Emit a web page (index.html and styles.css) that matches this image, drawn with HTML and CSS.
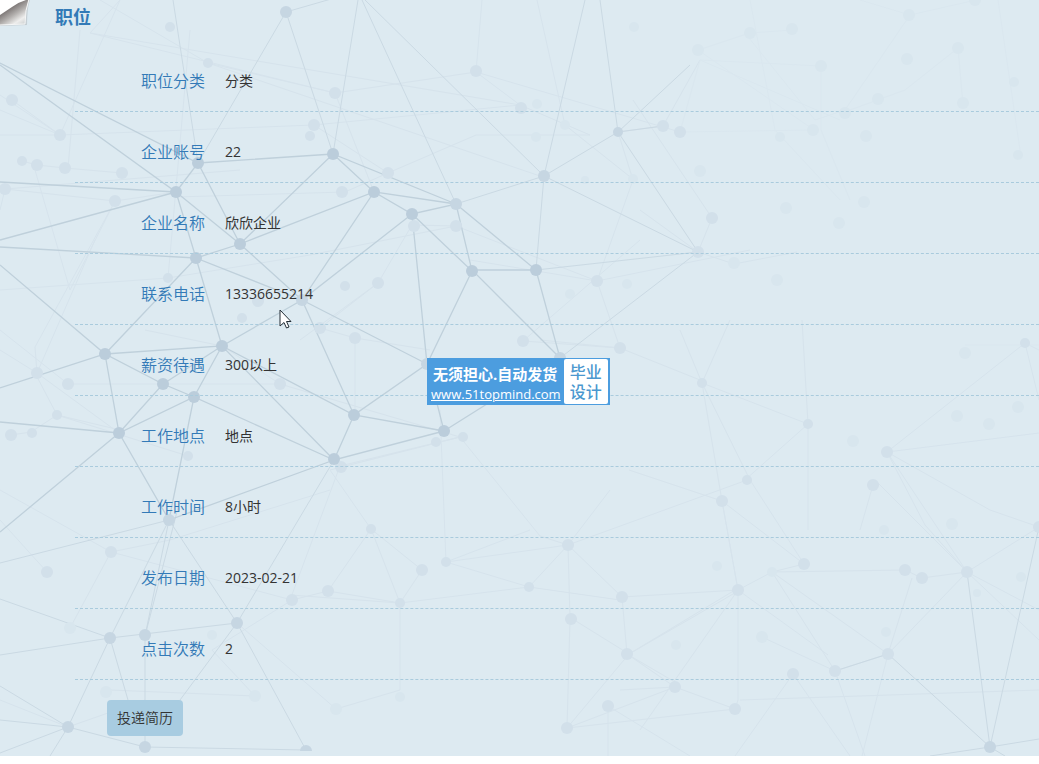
FILE: index.html
```html
<!DOCTYPE html>
<html lang="zh-CN">
<head>
<meta charset="utf-8">
<title>职位</title>
<link rel="stylesheet" href="styles.css">
</head>
<body>
<main class="page">
  <svg class="network" viewBox="0 0 1039 756" preserveAspectRatio="xMinYMin slice" aria-hidden="true">
    <g class="net-faint">
      <path d="M0 95L60 135L12 100M60 135L0 110M0 135H60L314 125L520 105L476 72L335 93L208 63L100 0M208 63L540 176M60 135L120 0M5 189L115 201L176 192M22 161L37 165L65 168L122 173M115 201L35 347L37 373L0 350M115 201L70 290L35 170M80 30L68 168M168 278L0 290M168 278L310 255L456 226L412 225L378 283L320 328L355 338L430 350M168 278L190 30M37 373L95 240M37 373L119 433M68 384H280L460 437L330 470M68 384L0 330M35 373L57 415L120 430M11 435L31 432L57 415L188 456M0 490L111 552L170 540L330 490M47 572L0 520M111 552L70 628M111 552L292 600L328 591L400 603L422 570M328 591L371 529L330 470M255 696L110 690M336 709L237 623M255 696L212 650L292 600M371 529L422 570M371 529L400 603L400 690L336 709M460 437L540 536L568 545M476 72L482 0M476 72L680 132M335 93L374 192M335 93L90 33M388 173L314 125M388 173L345 192L176 197M388 173L476 135H590L520 105M456 226L597 281L620 348L523 341L640 240M597 281L633 180L618 132M378 283L300 340M355 338L355 415M280 384L222 346L145 330M340 466L460 437M340 466L290 600M565 125L537 0M565 125L634 180M712 218L633 100M712 218L698 252L640 210M698 252L734 264L797 252M618 132L663 126L700 60M702 383L680 330M702 383L730 320M702 383L808 424L745 480M702 383L722 501L738 590L828 655M702 383L750 480L804 564M802 320L808 424V530M887 452L1039 433M887 452L1025 343L1039 350M887 452L990 510L1039 527L967 572L887 452M887 452L925 525L967 572L922 578L905 570L772 572L804 564M873 485L860 530M1025 343L1039 400M568 545L747 480M568 545L446 562L529 587L400 603L290 595M568 545L529 587M568 545L622 597L738 590L772 572M568 545L570 619L567 728L629 654L735 590M622 597L627 654L675 687L735 709L567 728L675 687M571 618L629 654L740 590M627 654L680 685M722 501L804 564M722 501L629 470M722 501L738 590V700L735 709M738 590L640 730M446 562L440 410M446 562L530 530M762 637L835 671L888 654L912 578M888 654L772 572L835 671L865 756M888 654L967 572L1039 640M888 654L862 756M793 674L735 756M793 674L850 756M675 687L620 690M608 706V756M608 706L690 756M529 587L620 600M967 572L1039 610M740 700L1039 690M610 490L568 545M875 480L967 572M470 260L597 281L750 250M540 340L620 348L700 380M120 0L90 33L520 105M0 210L5 189L240 170M0 700L68 727L145 700"/>
    </g>
    <g class="net-pale">
      <path d="M700 60L821 66M680 132L700 60M698 50L750 33L792 30M698 50L814 130L680 132M745 33L815 120L845 110L910 15L976 0M750 0L775 130L840 200M821 66V130L850 200M958 48L963 105M998 0L1020 150M910 15L860 0M958 48L905 90L850 110M700 60L840 120M965 345H1039"/>
    </g>
    <g class="net-soft">
      <path d="M544 176L585 0M618 132L600 0M544 176L618 132L698 252M544 176L698 252M618 132L663 126M618 132L690 65M536 270L698 252L560 358M544 176L536 270M110 638L128 700M145 636V747M237 623L180 700M68 727L0 686M68 727L0 720M68 727L0 753M68 727L145 747L306 750M68 727L50 756M145 636L180 500M888 654L990 747L967 572M990 747L1039 527M990 747L1039 739M990 747L930 756M990 747L1005 756M888 654L835 671M334 460L237 623M286 12L345 -5M173 0L198 163L286 12L333 154L358 0M362 0L456 204M365 0L544 176L456 204M0 563L169 520M169 520L110 638L0 599M169 520L237 623L110 638L0 655M169 520L145 636M110 638L68 727M237 623L306 750"/>
    </g>
    <g class="net-strong">
      <path d="M0 63L198 163L333 154L374 192L456 204L333 154L240 244L198 163L176 192L0 65M0 182L176 192L0 240M176 192L240 244L302 300L196 258L176 192M0 247L196 258L240 244L374 192L412 214L456 204L472 271L412 214L427 364L302 300L412 214M196 258L105 354L0 265M196 258L222 346L105 354L0 388M302 300L222 346M374 192L302 300M222 346L163 384L105 354L119 433L163 384L194 397L222 346L334 460L194 397L119 433L0 422M302 300L354 415L222 346M456 204L536 270H472L560 358L536 270M472 271L427 364L354 415L444 431L334 460L354 415M444 431L560 358M427 364L444 431M0 532L119 433L169 520L334 460M194 397L169 520"/>
    </g>
    <g class="dot-faint">
      <circle cx="12" cy="100" r="6"/><circle cx="60" cy="135" r="6"/><circle cx="22" cy="161" r="5"/><circle cx="37" cy="165" r="6"/><circle cx="65" cy="168" r="6"/><circle cx="122" cy="173" r="6"/><circle cx="5" cy="189" r="6"/><circle cx="115" cy="201" r="6"/><circle cx="208" cy="63" r="5"/><circle cx="170" cy="27" r="5"/><circle cx="335" cy="93" r="6"/><circle cx="314" cy="125" r="6"/><circle cx="310" cy="136" r="5"/><circle cx="342" cy="192" r="6"/><circle cx="168" cy="278" r="5"/><circle cx="37" cy="373" r="6"/><circle cx="68" cy="384" r="6"/><circle cx="57" cy="415" r="5"/><circle cx="11" cy="435" r="6"/><circle cx="32" cy="433" r="5"/><circle cx="188" cy="456" r="5"/><circle cx="280" cy="384" r="6"/><circle cx="320" cy="328" r="6"/><circle cx="258" cy="301" r="6"/><circle cx="242" cy="318" r="5"/><circle cx="355" cy="338" r="6"/><circle cx="378" cy="283" r="6"/><circle cx="345" cy="286" r="5"/><circle cx="388" cy="173" r="6"/><circle cx="414" cy="226" r="6"/><circle cx="456" cy="226" r="6"/><circle cx="476" cy="71" r="6"/><circle cx="521" cy="108" r="6"/><circle cx="663" cy="126" r="6"/><circle cx="680" cy="132" r="6"/><circle cx="597" cy="281" r="6"/><circle cx="523" cy="341" r="6"/><circle cx="620" cy="348" r="6"/><circle cx="463" cy="437" r="5"/><circle cx="436" cy="442" r="5"/><circle cx="341" cy="467" r="6"/><circle cx="111" cy="552" r="6"/><circle cx="47" cy="572" r="6"/><circle cx="292" cy="600" r="6"/><circle cx="328" cy="591" r="6"/><circle cx="371" cy="529" r="5"/><circle cx="422" cy="570" r="6"/><circle cx="446" cy="562" r="5"/><circle cx="400" cy="603" r="5"/><circle cx="529" cy="587" r="5"/><circle cx="568" cy="545" r="6"/><circle cx="622" cy="597" r="6"/><circle cx="571" cy="619" r="6"/><circle cx="627" cy="654" r="6"/><circle cx="675" cy="687" r="6"/><circle cx="608" cy="706" r="6"/><circle cx="567" cy="728" r="6"/><circle cx="735" cy="709" r="6"/><circle cx="738" cy="590" r="6"/><circle cx="804" cy="564" r="6"/><circle cx="722" cy="501" r="6"/><circle cx="747" cy="480" r="5"/><circle cx="702" cy="383" r="5"/><circle cx="808" cy="424" r="5"/><circle cx="887" cy="452" r="6"/><circle cx="873" cy="485" r="6"/><circle cx="905" cy="570" r="6"/><circle cx="922" cy="578" r="6"/><circle cx="967" cy="572" r="6"/><circle cx="888" cy="654" r="6"/><circle cx="835" cy="671" r="6"/><circle cx="793" cy="674" r="6"/><circle cx="1025" cy="343" r="5"/><circle cx="1039" cy="527" r="6"/><circle cx="712" cy="218" r="6"/><circle cx="698" cy="252" r="6"/>
    </g>
    <g class="dot-pale">
      <circle cx="537" cy="104" r="5"/><circle cx="565" cy="125" r="5"/><circle cx="536" cy="137" r="5"/><circle cx="585" cy="180" r="4"/><circle cx="633" cy="179" r="5"/><circle cx="570" cy="294" r="5"/><circle cx="627" cy="284" r="5"/><circle cx="70" cy="628" r="6"/><circle cx="212" cy="635" r="5"/><circle cx="255" cy="696" r="6"/><circle cx="106" cy="692" r="6"/><circle cx="336" cy="709" r="6"/><circle cx="400" cy="697" r="5"/><circle cx="772" cy="572" r="5"/><circle cx="977" cy="593" r="4"/><circle cx="762" cy="637" r="6"/>
      <circle cx="698" cy="50" r="6"/><circle cx="750" cy="33" r="6"/><circle cx="792" cy="29" r="6"/><circle cx="821" cy="66" r="6"/><circle cx="909" cy="15" r="6"/><circle cx="975" cy="0" r="6"/><circle cx="907" cy="59" r="6"/><circle cx="958" cy="48" r="6"/><circle cx="878" cy="99" r="6"/><circle cx="845" cy="113" r="6"/><circle cx="963" cy="103" r="6"/><circle cx="1014" cy="82" r="5"/><circle cx="813" cy="130" r="6"/><circle cx="780" cy="137" r="5"/><circle cx="866" cy="136" r="6"/><circle cx="700" cy="171" r="6"/><circle cx="1018" cy="155" r="5"/><circle cx="786" cy="208" r="6"/><circle cx="864" cy="202" r="6"/><circle cx="839" cy="223" r="6"/><circle cx="634" cy="27" r="5"/><circle cx="734" cy="263" r="6"/><circle cx="777" cy="280" r="6"/><circle cx="965" cy="353" r="6"/><circle cx="957" cy="416" r="6"/><circle cx="989" cy="424" r="6"/><circle cx="1018" cy="407" r="6"/><circle cx="853" cy="441" r="6"/><circle cx="952" cy="524" r="6"/><circle cx="884" cy="530" r="5"/><circle cx="1021" cy="577" r="5"/><circle cx="886" cy="632" r="5"/><circle cx="717" cy="566" r="5"/><circle cx="676" cy="645" r="5"/>
    </g>
    <g class="dot-soft">
      <circle cx="286" cy="12" r="6"/><circle cx="544" cy="176" r="6"/><circle cx="618" cy="132" r="5"/><circle cx="560" cy="358" r="6"/><circle cx="427" cy="364" r="6"/><circle cx="456" cy="204" r="6"/><circle cx="302" cy="300" r="6"/><circle cx="169" cy="520" r="6"/><circle cx="237" cy="623" r="6"/><circle cx="110" cy="638" r="6"/><circle cx="145" cy="635" r="6"/><circle cx="68" cy="727" r="6"/><circle cx="145" cy="747" r="6"/><path d="M300 751a6 6 0 0 1 12 0z"/><circle cx="990" cy="747" r="6"/>
    </g>
    <g class="dot-strong">
      <circle cx="198" cy="163" r="6"/><circle cx="333" cy="154" r="6"/><circle cx="176" cy="192" r="6"/><circle cx="240" cy="244" r="6"/><circle cx="196" cy="258" r="6"/><circle cx="374" cy="192" r="6"/><circle cx="412" cy="214" r="6"/><circle cx="472" cy="271" r="6"/><circle cx="536" cy="270" r="6"/><circle cx="222" cy="346" r="6"/><circle cx="105" cy="354" r="6"/><circle cx="163" cy="384" r="6"/><circle cx="194" cy="397" r="6"/><circle cx="119" cy="433" r="6"/><circle cx="334" cy="459" r="6"/><circle cx="354" cy="415" r="6"/><circle cx="444" cy="431" r="6"/>
    </g>
  </svg>

  <svg class="curl" viewBox="0 0 32 28" aria-hidden="true">
    <defs>
      <linearGradient id="fold" x1="10" y1="7" x2="22" y2="25" gradientUnits="userSpaceOnUse">
        <stop offset="0" stop-color="#777170"/><stop offset=".4" stop-color="#b3b0ae"/><stop offset=".75" stop-color="#eeeeed"/><stop offset="1" stop-color="#d0d3d4"/>
      </linearGradient>
    </defs>
    <path d="M0 0H30Q27 8 27 25L0 26Z" fill="#bac2c6" opacity=".7"/>
    <path d="M-1 -1H29Q25 10 25 24L-1 25Z" fill="url(#fold)" stroke="#f5f6f6" stroke-width="1"/>
    <path d="M0 0H26Q19 2 12 7Q6 11 0 15Z" fill="#fff"/>
  </svg>

  <h1 class="title">职位</h1>

  <dl class="details">
    <div class="row"><dt>职位分类</dt><dd>分类</dd></div>
    <div class="row"><dt>企业账号</dt><dd>22</dd></div>
    <div class="row"><dt>企业名称</dt><dd>欣欣企业</dd></div>
    <div class="row"><dt>联系电话</dt><dd>13336655214</dd></div>
    <div class="row"><dt>薪资待遇</dt><dd>300以上</dd></div>
    <div class="row"><dt>工作地点</dt><dd>地点</dd></div>
    <div class="row"><dt>工作时间</dt><dd>8小时</dd></div>
    <div class="row"><dt>发布日期</dt><dd>2023-02-21</dd></div>
    <div class="row"><dt>点击次数</dt><dd>2</dd></div>
  </dl>

  <button class="apply" type="button">投递简历</button>

  <aside class="badge">
    <div class="badge-text">
      <span class="badge-slogan">无须担心.自动发货</span>
      <a class="badge-link" href="#">www.51topmind.com</a>
    </div>
    <div class="badge-box"><span>毕业</span><span>设计</span></div>
  </aside>

  <svg class="cursor" viewBox="0 0 13 20" aria-hidden="true">
    <path d="M1 1V17L5 13.5L7.5 19L10 18L7.500 12.500H12Z" fill="#fff" stroke="#222d35" stroke-width="1"/>
  </svg>
</main>
</body>
</html>
```
FILE: styles.css
```css
* {
  box-sizing: border-box;
}

body {
  margin: 0;
  background: #fff;
  color: #333;
  font: 350 14px/20px "Open Sans", "Noto Sans CJK SC", sans-serif;
}

.page {
  position: relative;
  isolation: isolate;
  overflow: hidden;
  padding-bottom: 20px;
  background: #ddeaf1;
}

.network {
  position: absolute;
  inset: 0;
  z-index: -1;
  width: 100%;
  height: 100%;
  fill: none;
}

.net-pale { stroke: #dae7ef; }
.net-faint { stroke: #d6e3ec; }
.net-soft { stroke: #cad9e3; }
.net-strong { stroke: #bfd0db; stroke-width: 1.300; }
.dot-pale { fill: #d8e6ee; }
.dot-faint { fill: #d2e0ea; }
.dot-soft { fill: #c6d6e2; }
.dot-strong { fill: #bbcddb; }

.curl {
  position: absolute;
  top: 0;
  left: 0;
  width: 32px;
  height: 28px;
}

.title {
  margin: 0;
  padding: 1px 0 8px 55px;
  color: #337ab7;
  font-size: 18px;
  line-height: 32px;
  font-weight: 700;
}

.details {
  margin: 0 0 20px 75px;
}

.row {
  display: flex;
  gap: 20px;
  padding: 20px 0 10px;
  border-bottom: 1px dashed #a9cbdd;
  line-height: 40px;
}

.row dt {
  width: 130px;
  color: #337ab7;
  font-size: 16px;
  text-align: right;
}

.row dd {
  margin: 0;
  font-weight: 400;
}

.apply {
  display: block;
  margin-left: 107px;
  padding: 8px 10px;
  border: 0;
  border-radius: 4px;
  background: #a8cce1;
  color: #333;
  font: inherit;
}

.badge {
  position: absolute;
  top: 358px;
  left: 427px;
  display: flex;
  gap: 3px;
  padding: 1px 2px 1px 4px;
  background: #4c9ddf;
  color: #fff;
}

.badge-text {
  display: flex;
  flex-direction: column;
  padding-top: 4px;
  white-space: nowrap;
}

.badge-slogan {
  padding-left: 2px;
  font-size: 15px;
  line-height: 22px;
  font-weight: 700;
}

.badge-link {
  color: #fff;
  font-size: 13px;
  line-height: 19px;
  font-weight: 500;
}

.badge-box {
  display: flex;
  flex-direction: column;
  justify-content: center;
  padding: 0 6px;
  border-radius: 2px;
  background: #fff;
  color: #4b98cf;
  font-size: 16px;
  line-height: 20px;
  font-weight: 500;
}

.cursor {
  position: absolute;
  top: 309px;
  left: 279px;
  width: 13px;
  height: 20px;
}
```
